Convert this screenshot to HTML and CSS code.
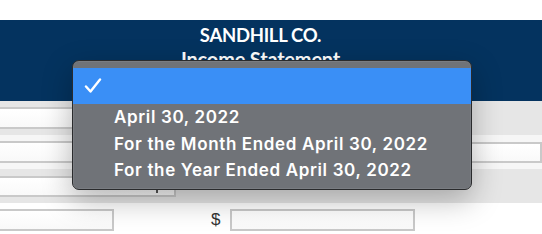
FILE: index.html
```html
<!DOCTYPE html>
<html>
<head>
<meta charset="utf-8">
<link rel="stylesheet" href="styles.css">
</head>
<body>
<div class="page">
  <div class="topgap"></div>
  <header class="hdr">
    <div class="company">SANDHILL CO.</div>
    <div class="title">Income Statement</div>
  </header>
  <div class="rows">
    <div class="row shade">
      <div class="field w-a"></div>
    </div>
    <div class="row light">
      <div class="field w-a"></div>
      <div class="spacer"></div>
      <div class="field w-r"></div>
    </div>
    <div class="row shade">
      <div class="field w-sel"><span class="tick"></span></div>
    </div>
    <div class="row plain">
      <div class="field w-b"></div>
      <span class="dollar">$</span>
      <div class="field w-c"></div>
    </div>
  </div>

  <div class="menu">
    <div class="menu-item selected">
      <svg class="check" width="18" height="16" viewBox="0 0 18 16">
        <path d="M2 8.5 L6.5 13.5 L16 1.5" fill="none" stroke="#fff" stroke-width="2.4" stroke-linecap="round" stroke-linejoin="round"/>
      </svg>
    </div>
    <div class="menu-item">April 30, 2022</div>
    <div class="menu-item">For the Month Ended April 30, 2022</div>
    <div class="menu-item">For the Year Ended April 30, 2022</div>
  </div>
</div>
</body>
</html>
```
FILE: styles.css
```css
html, body {
  margin: 0;
  padding: 0;
  background: #ffffff;
}
.page {
  position: relative;
  width: 542px;
  height: 234px;
  overflow: hidden;
  font-family: Lato, "Liberation Sans", sans-serif;
}
.topgap {
  height: 20px;
  background: #ffffff;
}
.hdr {
  height: 81px;
  background: #04335f;
  color: #ffffff;
  display: flex;
  flex-direction: column;
  align-items: center;
  padding-right: 21px;
  box-sizing: border-box;
  padding-top: 3px;
}
.company {
  font-weight: 700;
  font-size: 18.5px;
  line-height: 24px;
  letter-spacing: -0.3px;
}
.title {
  font-weight: 700;
  font-size: 20px;
  line-height: 26px;
  margin-top: -1px;
  letter-spacing: -0.2px;
}
.rows {
  display: flex;
  flex-direction: column;
}
.row {
  height: 34px;
  display: flex;
  align-items: center;
  margin-left: -10px;
}
.shade { background: #e6e6e6; }
.light { background: #f6f6f6; }
.plain { background: #ffffff; }
.field {
  height: 22px;
  box-sizing: border-box;
  border: 2px solid #c9c9c9;
  background: linear-gradient(#ffffff, #f9f9f9);
  position: relative;
}
.w-a { width: 200px; }
.w-sel { width: 186px; height: 21px; }
.w-b { width: 124px; }
.w-c { width: 185px; }
.w-r { width: 80px; height: 21px; }
.spacer { flex: 1; }
.light .spacer { max-width: 280px; }
.dollar {
  margin-left: 97px;
  margin-right: 10px;
  font-size: 17px;
  color: #333333;
  font-family: "Liberation Sans", sans-serif;
}
.tick {
  position: absolute;
  right: 16px;
  bottom: 2px;
  width: 2px;
  height: 5px;
  background: #555;
}
.menu {
  position: absolute;
  left: 72px;
  top: 60px;
  width: 400px;
  height: 130px;
  box-sizing: border-box;
  border: 1px solid #2a2b2d;
  border-radius: 7px;
  background: #707378;
  padding-top: 7px;
  box-shadow: 0 10px 30px rgba(0,0,0,0.28), 0 0 0 0.5px rgba(255,255,255,0.15) inset;
  font-family: Inter, "Noto Sans", sans-serif;
  font-weight: 600;
  font-size: 17px;
  letter-spacing: 0.65px;
  color: #ffffff;
  overflow: hidden;
}
.menu-item {
  height: 26.5px;
  line-height: 26.5px;
  padding-left: 41px;
  white-space: nowrap;
}
.menu-item.selected {
  height: 36px;
  background: #3a8ff6;
  padding-left: 11px;
  display: flex;
  align-items: center;
}
.check { display: block; }
```
